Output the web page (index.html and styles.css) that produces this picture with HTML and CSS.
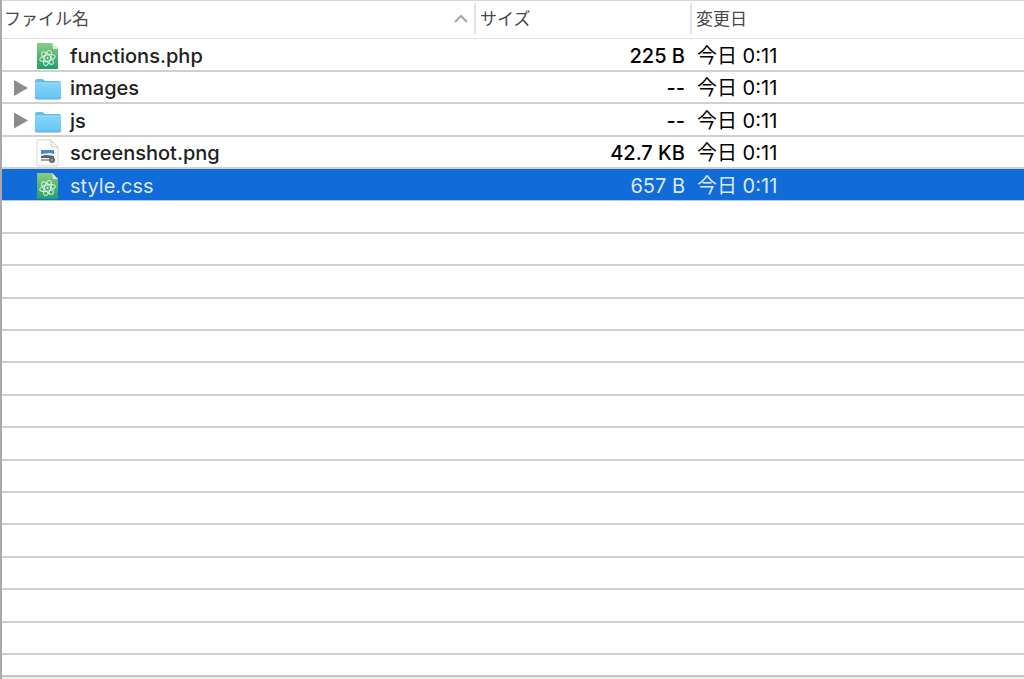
FILE: index.html
```
<!DOCTYPE html>
<html lang="ja">
<head>
    <meta charset="UTF-8">
    <meta name="viewport" content="width=device-width, initial-scale=1.0">
    <title>ファイル一覧</title>
    <link rel="stylesheet" href="styles.css">
</head>
<body>
    <!-- アイコン定義 -->
    <svg class="icon-defs" aria-hidden="true">
        <defs>
            <linearGradient id="green" x1="0" y1="0" x2="0" y2="1">
                <stop offset="0" stop-color="#8ccb84"/>
                <stop offset="1" stop-color="#1f9f6b"/>
            </linearGradient>
            <linearGradient id="blue" x1="0" y1="0" x2="0" y2="1">
                <stop offset="0" stop-color="#85d5f9"/>
                <stop offset="1" stop-color="#65c5f3"/>
            </linearGradient>
            <symbol id="icon-atom" viewBox="0 0 28 28">
                <path d="M3 1h15l6 6v20H3z" fill="url(#green)"/>
                <path d="M18 1l6 6-5 0z" fill="#d5ecd0"/>
                <g fill="none" stroke="#dcf3e0" stroke-width="1">
                    <ellipse cx="13.500" cy="16" rx="8" ry="3.200" transform="rotate(-14 13.500 16)"/>
                    <ellipse cx="13.500" cy="16" rx="8" ry="3.200" transform="rotate(48 13.500 16)"/>
                    <ellipse cx="13.500" cy="16" rx="8" ry="3.200" transform="rotate(108 13.500 16)"/>
                </g>
                <circle cx="13.500" cy="16" r="1" fill="#dcf3e0"/>
            </symbol>
            <symbol id="icon-folder" viewBox="0 0 28 28">
                <path d="M1 7q0-2 2-2h5q1 0 2 1l1 1h14q2 0 2 2v3H1z" fill="#62bfeb"/>
                <path d="M1 9h26v14q0 2-2 2H3q-2 0-2-2z" fill="url(#blue)"/>
                <path d="M1 9h26" stroke="#a0dffb"/>
                <path d="M1 23q0 2 2 2h22q2 0 2-2" fill="none" stroke="#58addb"/>
            </symbol>
            <symbol id="icon-png" viewBox="0 0 28 28">
                <path d="M3 2q0-1 1-1h13l7 7v18q0 1-1 1H4q-1 0-1-1z" fill="#fdfdfd" stroke="#d6d6d6"/>
                <path d="M17 1v5q0 2 2 2h5z" fill="#f2f2f2" stroke="#d0d0d0"/>
                <path d="M7 11h13l-1 11H7z" fill="#e9edf1"/>
                <path d="M7 11l13 0v4l-4-1-9 1z" fill="#4a86cc"/>
                <path d="M7 17l5-1 8 1v2H7z" fill="#4f6078"/>
                <path d="M7 20h9v2H7z" fill="#b3a28a"/>
                <circle cx="18" cy="21" r="3" fill="#6c6866"/>
                <circle cx="18" cy="21" r="1" fill="#aaa"/>
            </symbol>
        </defs>
    </svg>

    <div class="file-list">
        <div class="list-body">
            <table class="files">
                <colgroup>
                    <col class="col-name">
                    <col class="col-size">
                    <col class="col-date">
                </colgroup>
                <thead>
                    <tr>
                        <th>
                            <div class="heading">
                                <span>ファイル名</span>
                                <svg class="sort" viewBox="0 0 14 10"><path d="M1 8l6-6 6 6" fill="none" stroke="#a6a6a6" stroke-width="2"/></svg>
                            </div>
                        </th>
                        <th><div class="heading">サイズ</div></th>
                        <th><div class="heading">変更日</div></th>
                    </tr>
                </thead>
                <tbody>
                    <tr>
                        <td><div class="name"><span class="toggle"></span><svg class="icon"><use href="#icon-atom"/></svg>functions.php</div></td>
                        <td class="size">225 B</td>
                        <td class="date">今日 0:11</td>
                    </tr>
                    <tr>
                        <td><div class="name"><button class="toggle" type="button" aria-label="imagesを開く"></button><svg class="icon"><use href="#icon-folder"/></svg>images</div></td>
                        <td class="size">--</td>
                        <td class="date">今日 0:11</td>
                    </tr>
                    <tr>
                        <td><div class="name"><button class="toggle" type="button" aria-label="jsを開く"></button><svg class="icon"><use href="#icon-folder"/></svg>js</div></td>
                        <td class="size">--</td>
                        <td class="date">今日 0:11</td>
                    </tr>
                    <tr>
                        <td><div class="name"><span class="toggle"></span><svg class="icon"><use href="#icon-png"/></svg>screenshot.png</div></td>
                        <td class="size">42.7 KB</td>
                        <td class="date">今日 0:11</td>
                    </tr>
                    <tr class="selected">
                        <td><div class="name"><span class="toggle"></span><svg class="icon"><use href="#icon-atom"/></svg>style.css</div></td>
                        <td class="size">657 B</td>
                        <td class="date">今日 0:11</td>
                    </tr>
                    <!-- 空行 -->
                    <tr><td colspan="3"></td></tr>
                    <tr><td colspan="3"></td></tr>
                    <tr><td colspan="3"></td></tr>
                    <tr><td colspan="3"></td></tr>
                    <tr><td colspan="3"></td></tr>
                    <tr><td colspan="3"></td></tr>
                    <tr><td colspan="3"></td></tr>
                    <tr><td colspan="3"></td></tr>
                    <tr><td colspan="3"></td></tr>
                    <tr><td colspan="3"></td></tr>
                    <tr><td colspan="3"></td></tr>
                    <tr><td colspan="3"></td></tr>
                    <tr><td colspan="3"></td></tr>
                    <tr><td colspan="3"></td></tr>
                </tbody>
            </table>
        </div>
        <div class="list-end"></div>
    </div>
</body>
</html>
```
FILE: styles.css
```
* {
    margin: 0;
    padding: 0;
    box-sizing: border-box;
}

body {
    font-family: Inter, "Noto Sans CJK JP", sans-serif;
    font-size: 20px;
    font-weight: 450;
    line-height: 28px;
    color: #222;
    background: #fff;
}

.icon-defs {
    position: absolute;
    width: 0;
    height: 0;
}

.file-list {
    display: flex;
    flex-direction: column;
    height: 100vh;
    border-left: 2px solid #a9a9a9;
}

.list-body {
    flex: 1;
    min-height: 0;
    overflow: hidden;
}

.list-end {
    height: 4px;
    background: #eee;
    border-top: 2px solid #c4c4c4;
}

.files {
    width: 100%;
    table-layout: fixed;
    border-collapse: separate;
    border-spacing: 0;
}

.col-name {
    width: 472px;
}

.col-size {
    width: 216px;
}

/* 見出し */
th {
    height: 39px;
    padding-bottom: 2px;
    border-top: 1px solid #d6d6d6;
    border-bottom: 1px solid #dedede;
    font-size: 17px;
    font-weight: 400;
    color: #484848;
    text-align: left;
}

.heading {
    display: flex;
    align-items: center;
    justify-content: space-between;
    height: 31px;
    padding: 0 6px 0 2px;
}

th + th .heading {
    padding-left: 4px;
    border-left: 2px solid #e4e4e4;
}

.sort {
    width: 14px;
    height: 10px;
}

/* 行 */
td {
    height: 32px;
    padding-top: 2px;
    border-bottom: 2px solid #d0d0d0;
    white-space: nowrap;
}

tr:nth-child(5n + 1) td,
tr:nth-child(5n + 3) td {
    height: 33px;
}

.name {
    display: flex;
    align-items: center;
    padding-left: 12px;
}

.toggle {
    width: 14px;
    height: 16px;
    margin-right: 6px;
    border: none;
    background: none;
}

button.toggle {
    background: #8c8c8c;
    clip-path: polygon(0 0, 100% 50%, 0 100%);
    cursor: pointer;
}

.icon {
    width: 28px;
    height: 28px;
    margin-right: 8px;
}

.size {
    padding-right: 5px;
    text-align: right;
    color: #000;
}

.date {
    padding-left: 7px;
    font-weight: 400;
    color: #000;
}

.selected td {
    background: #116bd8;
    border-bottom: 1px solid #bcc6d2;
    font-weight: 400;
    color: #dce9fb;
}
```
